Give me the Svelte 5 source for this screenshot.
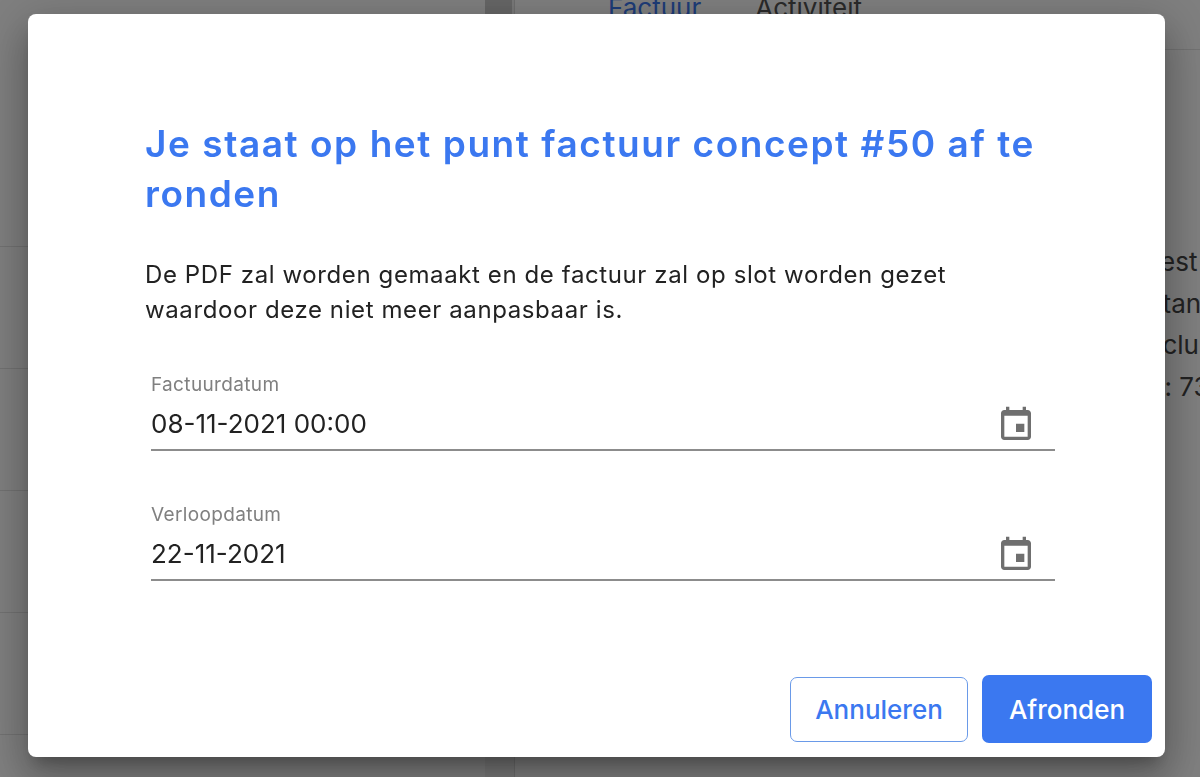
<script lang="ts">
	const rows = [0, 1, 2, 3, 4, 5];
	const fields = [
		{ label: 'Factuurdatum', value: '08-11-2021 00:00' },
		{ label: 'Verloopdatum', value: '22-11-2021' }
	];
</script>

<div class="page">
	<div class="list">
		{#each rows as row (row)}
			<div class="row"></div>
		{/each}
	</div>
	<div class="gutter">
		<div class="thumb"></div>
	</div>
	<div class="detail">
		<div class="tabs">
			<span class="tab active">Factuur</span>
			<span class="tab">Activiteit</span>
		</div>
		<div class="meta">
			<p>Naam: Test</p>
			<p>Via: Contant</p>
			<p>Totaal inclusief</p>
			<p>Nummer: 73</p>
		</div>
	</div>
</div>

<div class="overlay">
	<div class="dialog">
		<div class="content">
			<h2>Je staat op het punt factuur concept #50 af te ronden</h2>
			<p class="intro">De PDF zal worden gemaakt en de factuur zal op slot worden gezet waardoor deze niet meer aanpasbaar is.</p>

			{#each fields as field (field.label)}
				<div class="field">
					<span class="label">{field.label}</span>
					<div class="control">
						<span class="value">{field.value}</span>
						<svg viewBox="0 0 24 24" width="40" height="40" aria-hidden="true">
							<path d="M17 11.2h-5v5h5v-5zM16 1v2H8V1H6v2H5c-1.11 0-1.99.9-1.99 2L3 19c0 1.1.89 2 2 2h14c1.1 0 2-.9 2-2V5c0-1.1-.9-2-2-2h-1V1h-2zm3 18H5V6.5h14V19z" />
						</svg>
					</div>
				</div>
			{/each}
		</div>

		<div class="actions">
			<button class="secondary">Annuleren</button>
			<button class="primary">Afronden</button>
		</div>
	</div>
</div>

<style>
	:global(body) {
		background: #fff;
		font-family: 'Inter', sans-serif;
		overflow: hidden;
	}
	.page {
		display: flex;
		height: 777px;
		overflow: hidden;
	}
	.list {
		width: 485px;
	}
	.row {
		height: 121px;
		border-bottom: 1px solid #e4e4e4;
	}
	.row:first-child {
		height: 246px;
	}
	.gutter {
		width: 29px;
		background: #f2f2f2;
		border-right: 1px solid #dcdcdc;
	}
	.thumb {
		width: 27px;
		height: 320px;
		background: #ccc;
	}
	.detail {
		flex: 1;
		min-width: 0;
		white-space: nowrap;
		overflow: hidden;
	}
	.tabs {
		display: flex;
		gap: 54px;
		height: 59px;
		margin-top: -10px;
		padding-left: 93px;
		border-bottom: 1px solid #e4e4e4;
		font-size: 26px;
		line-height: 36px;
		color: #555;
	}
	.tab.active {
		color: #3b78f0;
	}
	.meta {
		margin-top: 191px;
		padding-left: 544px;
		font-size: 26px;
		line-height: 41.7px;
		color: #444;
	}
	.meta p {
		margin: 0;
	}
	.overlay {
		position: fixed;
		inset: 0;
		background: rgba(0, 0, 0, 0.5);
		display: flex;
		align-items: flex-start;
		padding: 14px 0 0 28px;
	}
	.dialog {
		display: flex;
		flex-direction: column;
		width: 1137px;
		height: 743px;
		background: #fff;
		border-radius: 8px;
		box-shadow: 0 11px 15px -7px rgba(0, 0, 0, 0.25), 0 24px 38px 3px rgba(0, 0, 0, 0.18), 0 9px 46px 8px rgba(0, 0, 0, 0.16);
	}
	.content {
		flex: 1;
		padding: 105px 110px 0 117px;
	}
	h2 {
		margin: 0 0 38px;
		font-size: 37px;
		line-height: 50px;
		letter-spacing: 1.55px;
		font-weight: 600;
		color: #3b78f0;
	}
	.intro {
		margin: 0 0 46px;
		font-size: 24px;
		line-height: 35px;
		letter-spacing: 0.6px;
		color: #222;
	}
	.field {
		margin: 0 0 52px 6px;
	}
	.label {
		display: block;
		font-size: 19px;
		line-height: 24px;
		letter-spacing: 0.35px;
		color: #808080;
	}
	.control {
		box-sizing: border-box;
		display: flex;
		align-items: center;
		justify-content: space-between;
		height: 54px;
		padding-right: 19px;
		border-bottom: 2px solid #8c8c8c;
	}
	.value {
		font-size: 26px;
		color: #222;
	}
	svg {
		margin-top: 4px;
		fill: #6f6f6f;
	}
	.actions {
		display: flex;
		align-items: center;
		justify-content: flex-end;
		gap: 14px;
		padding: 0 13px 14px;
	}
	button {
		box-sizing: border-box;
		border-radius: 7px;
		font: 500 26px 'Inter', sans-serif;
	}
	.secondary {
		width: 178px;
		height: 65px;
		background: #fff;
		border: 1px solid #6a9ae8;
		color: #3b78f0;
	}
	.primary {
		width: 170px;
		height: 68px;
		background: #3b78f0;
		border: 0;
		color: #fff;
	}
</style>
